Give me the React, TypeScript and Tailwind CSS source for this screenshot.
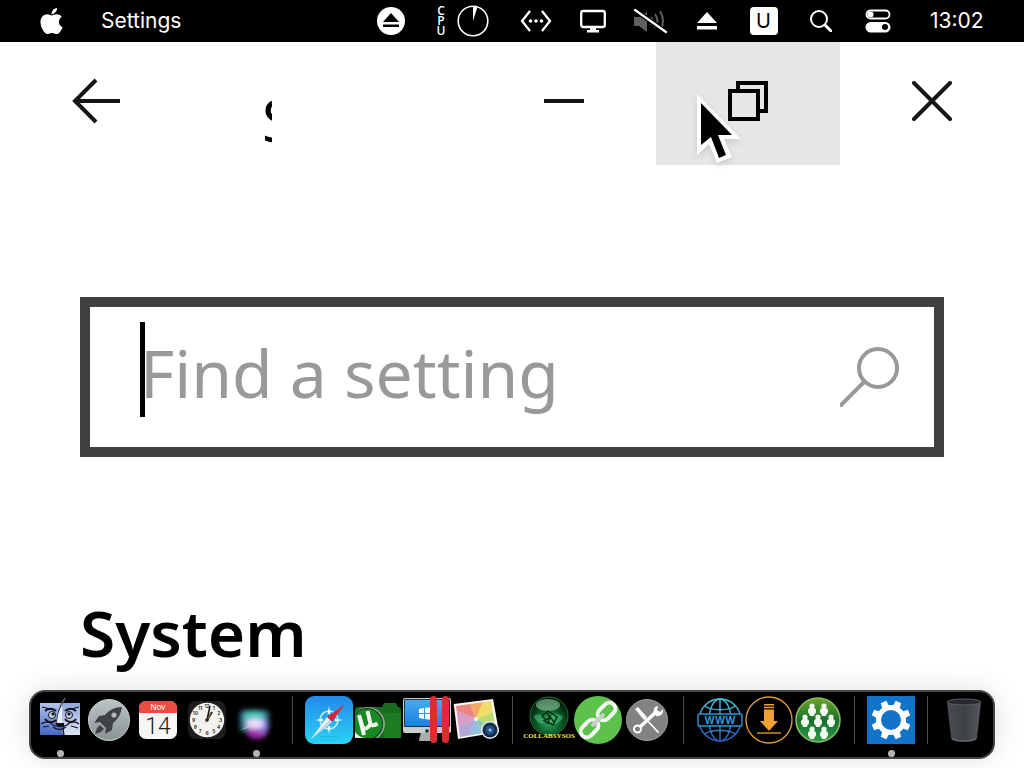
import type { ReactNode } from 'react'
import { FaApple } from 'react-icons/fa'

interface DockItem {
  name: string
  icon: ReactNode
  running?: boolean
}

const clockNumbers = [1, 2, 3, 4, 5, 6, 7, 8, 9, 10, 11, 12]
const people = [[18, 13], [30, 13], [11, 24], [24, 24], [37, 24], [18, 36], [30, 36]]
const teeth = [0, 45, 90, 135, 180, 225, 270, 315]
const petals = ['#f3ab62', '#f1dc66', '#bfdb6d', '#8fcbab', '#93bfe0', '#b3a7d8', '#da9cc6', '#ec8484']

function Icon({ children }: { children: ReactNode }) {
  return (
    <svg viewBox="0 0 48 48" className="size-12 overflow-visible" aria-hidden="true">
      {children}
    </svg>
  )
}

const dockGroups: DockItem[][] = [
  [
    {
      name: 'Finder',
      running: true,
      icon: (
        <Icon>
          <defs>
            <linearGradient id="finderLeft" x1="0" y1="0" x2="0" y2="1">
              <stop offset="0" stopColor="#b4c4ea" />
              <stop offset="1" stopColor="#4468c4" />
            </linearGradient>
            <linearGradient id="finderRight" x1="0" y1="0" x2="0" y2="1">
              <stop offset="0" stopColor="#8fa8dc" />
              <stop offset="1" stopColor="#dfe3f2" />
            </linearGradient>
          </defs>
          <rect x="4" y="7" width="40" height="32" fill="url(#finderLeft)" />
          <path d="M27 7h17v32H27c-1-4-1-7-1-11h-5c0-8 2-15 6-21z" fill="url(#finderRight)" />
          <path d="M29 2c-5 8-8 15-8 26h6c0 5 0 8 1 11" fill="none" stroke="#10131f" strokeWidth="1.4" />
          <path d="M21 27c0-7 2-13 5-18v18z" fill="#e9edf8" />
          <path d="M29 2l-4 7" stroke="#6f7276" strokeWidth="1.2" />
          <g fill="none" stroke="#10131f" strokeWidth="1.2">
            <path d="M6 11l12 3M31 14l12-3M5 28c5-3 9-3 12 1 5 2 10 2 14 0 4-4 8-4 12-1M7 31l6-1M35 30l7 2M17 31c4 3 9 3 13 0" />
            <path d="M9 15c3-3 8-3 11 0M29 15c3-3 8-3 11 0M9 23c3 4 8 4 11 1M29 23c3 4 8 4 11 0" strokeWidth="2" />
          </g>
          <circle cx="16" cy="19" r="3.5" fill="#ccd3e6" stroke="#10131f" />
          <circle cx="33" cy="19" r="3.5" fill="#ccd3e6" stroke="#10131f" />
          <circle cx="17" cy="18" r="1.6" fill="#10131f" />
          <circle cx="33" cy="18" r="1.6" fill="#10131f" />
          <path d="M19 27h9v3h-7z" fill="#10131f" />
        </Icon>
      ),
    },
    {
      name: 'Launchpad',
      icon: (
        <Icon>
          <defs>
            <linearGradient id="launchpad" x1="0" y1="0" x2="0" y2="1">
              <stop offset="0" stopColor="#bcc4c6" />
              <stop offset="1" stopColor="#8a9293" />
            </linearGradient>
          </defs>
          <circle cx="24" cy="24" r="20.5" fill="url(#launchpad)" stroke="#c9cfd0" strokeWidth="1" />
          <path d="M37 11c-7 0-13 3-17 8l-6 1-5 7 6-1 6 6-1 6 7-4 1-7c5-4 8-9 9-16zM15 29l-3 3-2 6 6-2 3-3z" fill="#3c4245" />
          <circle cx="29" cy="19" r="2.6" fill="#b0b8ba" />
        </Icon>
      ),
    },
    {
      name: 'Calendar',
      icon: (
        <Icon>
          <rect x="5" y="5" width="38" height="38" rx="7" fill="#f8f6f5" />
          <path d="M5 17v-5a7 7 0 0 1 7-7h24a7 7 0 0 1 7 7v5z" fill="#ec4c40" />
          <text x="24" y="14" textAnchor="middle" fontSize="8" fill="#fff" className="font-['Inter']">Nov</text>
          <text x="24" y="38" textAnchor="middle" fontSize="23" fontWeight="300" fill="#222" className="font-['Roboto']">14</text>
        </Icon>
      ),
    },
    {
      name: 'Clock',
      icon: (
        <Icon>
          <rect x="5" y="5" width="38" height="38" rx="8" fill="#1d1d1e" />
          <circle cx="24" cy="24" r="17.2" fill="#f4f2ee" />
          <g fontSize="5" fontWeight="600" textAnchor="middle" fill="#222" className="font-['Inter']">
            {clockNumbers.map((n) => (
              <text
                key={n}
                x={24 + 13.5 * Math.sin((n * Math.PI) / 6)}
                y={25.8 - 13.5 * Math.cos((n * Math.PI) / 6)}
              >
                {n}
              </text>
            ))}
          </g>
          <path d="M24 24l5-8" stroke="#111" strokeWidth="2" />
          <path d="M24 24l3-14" stroke="#111" strokeWidth="1.5" />
          <path d="M22 27l6-10" stroke="#c7a43c" strokeWidth=".8" />
          <circle cx="24" cy="24" r="1.8" fill="#222" />
        </Icon>
      ),
    },
    {
      name: 'Siri',
      running: true,
      icon: (
        <Icon>
          <defs>
            <filter id="siriBlur" x="-50%" y="-50%" width="200%" height="200%">
              <feGaussianBlur stdDeviation="2.5" />
            </filter>
          </defs>
          <g filter="url(#siriBlur)">
            <rect x="8" y="14" width="29" height="22" rx="5" fill="#3b7d92" />
            <ellipse cx="25" cy="37" rx="10" ry="6" fill="#a22bb0" />
            <ellipse cx="22" cy="21" rx="10" ry="6" fill="#4fc9bd" />
            <ellipse cx="31" cy="30" rx="6" ry="7" fill="#7d76dd" />
            <ellipse cx="23" cy="28" rx="9" ry="5" fill="#efdcff" />
          </g>
          <path d="M8 34c6-1 11-3 15-7-5 2-10 4-15 7z" fill="#d6c9dd" opacity=".6" />
        </Icon>
      ),
    },
  ],
  [
    {
      name: 'Safari',
      icon: (
        <Icon>
          <defs>
            <linearGradient id="safari" x1="0" y1="0" x2="0" y2="1">
              <stop offset="0" stopColor="#2389ea" />
              <stop offset="1" stopColor="#28d3f6" />
            </linearGradient>
          </defs>
          <rect width="48" height="48" rx="9" fill="url(#safari)" />
          <circle cx="24" cy="24" r="9" fill="none" stroke="#c5eefb" strokeWidth="1.5" />
          <path d="M24 10l1.5 8h-3zM24 38l1.5-8h-3zM10 24l8-1.5v3zM38 24l-8-1.5v3z" fill="#e7fbff" />
          <path d="M40 8L22 21l5 5z" fill="#d9263c" />
          <path d="M6 43l16-22 5 5z" fill="#f1f7fa" />
          <path d="M6 43l18.5-19.5L27 26z" fill="#c4d6e2" />
          <path d="M15 41h18M17 44h14" stroke="#159fd8" strokeWidth="1" strokeDasharray="1 1" />
        </Icon>
      ),
    },
    {
      name: 'uTorrent',
      icon: (
        <Icon>
          <defs>
            <clipPath id="folderClip">
              <rect x="1" y="7" width="46" height="35" />
            </clipPath>
          </defs>
          <path d="M1 14q0-3 3-3h24l2-4h12l2 4q3 0 3 3v28H1z" fill="#176d1d" />
          <path d="M30 17h17v25H30z" fill="#1c7c22" />
          <g clipPath="url(#folderClip)">
            <circle cx="14" cy="28" r="17" fill="#8e9b90" />
            <circle cx="13" cy="28" r="16" fill="#0b3d10" />
            <circle cx="13" cy="28" r="15" fill="#178a22" />
            <path d="M1 36c4 5 8 6 13 6H1z" fill="#e8efe8" />
          </g>
          <path d="M5 19l5 20M6 22l2.500 9q4 4 8-3l-3-13m3 13q2 3 7-.5" fill="none" stroke="#f0f5ec" strokeWidth="4" />
        </Icon>
      ),
    },
    {
      name: 'Parallels Desktop',
      icon: (
        <Icon>
          <defs>
            <linearGradient id="screen" x1="0" y1="0" x2="0" y2="1">
              <stop offset="0" stopColor="#4ba9ee" />
              <stop offset="1" stopColor="#1683e0" />
            </linearGradient>
          </defs>
          <path d="M18 36h13l3 8q0 1-1 1H17q-1 0-1-1z" fill="#a9adb0" />
          <rect x="0" y="2" width="48" height="35" rx="2" fill="#c9cccd" />
          <rect x="1" y="3" width="46" height="28" rx="1" fill="#27313b" />
          <rect x="2" y="4" width="44" height="26" fill="url(#screen)" />
          <path d="M16 13l5-1v5h-5zM22 12l7-1v6h-7zM16 18h5v5l-5-1zM22 18h7v6l-7-1z" fill="#fff" />
          <circle cx="24" cy="35" r="1.8" fill="#222" />
          <rect x="27" y="0" width="7" height="47" rx="3.5" fill="#dd2d2f" />
          <rect x="39" y="0" width="7" height="47" rx="3.5" fill="#dd2d2f" />
        </Icon>
      ),
    },
    {
      name: 'Photos',
      icon: (
        <Icon>
          <defs>
            <clipPath id="photoClip">
              <path d="M4 10l35-5 5 30-36 6z" />
            </clipPath>
          </defs>
          <path d="M1.7 8L41 3l6 33-41 7z" fill="#f8f7f4" />
          <g clipPath="url(#photoClip)">
            {petals.map((fill, i) => (
              <path key={fill} d="M24 23L9-13h30z" fill={fill} transform={`rotate(${i * 45} 24 23)`} />
            ))}
          </g>
          <circle cx="24" cy="23" r="2" fill="#fffbe9" />
          <circle cx="38" cy="34" r="9" fill="#e4e9ee" />
          <circle cx="38" cy="34" r="7.5" fill="#142c4f" />
          <circle cx="38" cy="34" r="4.5" fill="#245486" />
          <circle cx="38" cy="34" r="1.5" fill="#9ccae8" />
        </Icon>
      ),
    },
  ],
  [
    {
      name: 'Collabsysos',
      icon: (
        <Icon>
          <defs>
            <radialGradient id="orb" cx=".5" cy=".65" r=".55">
              <stop offset="0" stopColor="#2fae62" />
              <stop offset=".6" stopColor="#0d5b2a" />
              <stop offset="1" stopColor="#03230e" />
            </radialGradient>
          </defs>
          <circle cx="24" cy="20" r="19" fill="url(#orb)" stroke="#1d7a35" strokeWidth="1" />
          <ellipse cx="23" cy="9" rx="12" ry="6" fill="#9fd9b0" opacity=".55" />
          <path d="M9 20c5-3 9-1 13 3 5-6 9-7 16-2-4 7-10 9-17 5-5 4-10 0-12-6z" fill="#4fd386" opacity=".5" />
          <path d="M17 20l6-5 9 6-4 8-5-3 2-5-4 3zM22 17l7 9M18 24l6 4" fill="none" stroke="#032c12" strokeWidth="1.5" />
          <text x="24" y="42" textAnchor="middle" fontSize="7" fontWeight="700" fill="#f4e83a" className="font-['Liberation_Serif']">COLLABSYSOS</text>
        </Icon>
      ),
    },
    {
      name: 'Links',
      icon: (
        <Icon>
          <circle cx="24" cy="24" r="24" fill="#5cc24b" />
          <g fill="none" strokeWidth="4" transform="rotate(-45 24 24)">
            <rect x="2" y="18" width="20" height="12" rx="6" stroke="#f4f7f2" />
            <rect x="26" y="18" width="20" height="12" rx="6" stroke="#f4f7f2" />
            <path d="M17 24h14" stroke="#c9d0c9" strokeLinecap="round" />
          </g>
        </Icon>
      ),
    },
    {
      name: 'Tools',
      icon: (
        <Icon>
          <circle cx="24" cy="24" r="20.5" fill="#828282" stroke="#9b9b9b" strokeWidth="1" />
          <path d="M17 31l16-15" stroke="#fff" strokeWidth="3.5" />
          <circle cx="14.5" cy="33" r="3.5" fill="none" stroke="#fff" strokeWidth="2" />
          <path d="M31 17c-1-4 1-7 4-7l-1 4 3 2 3-3c1 4-2 8-7 7z" fill="#fff" />
          <path d="M12 13l3-2 9 10-3 3z" fill="#fff" />
          <path d="M21 21l14 15" stroke="#fff" strokeWidth="1.8" strokeLinecap="round" />
        </Icon>
      ),
    },
  ],
  [
    {
      name: 'Web',
      icon: (
        <Icon>
          <defs>
            <linearGradient id="web" gradientUnits="userSpaceOnUse" x1="0" y1="3" x2="0" y2="45">
              <stop offset="0" stopColor="#4fc6dc" />
              <stop offset="1" stopColor="#2563c4" />
            </linearGradient>
          </defs>
          <g fill="none" stroke="url(#web)" strokeWidth="1.4">
            <circle cx="24" cy="24" r="21" />
            <ellipse cx="24" cy="24" rx="11" ry="21" />
            <path d="M24 3v42M8 10c9 5 23 5 32 0M8 38c9-5 23-5 32 0" />
          </g>
          <rect x="2" y="18" width="44" height="12" rx="1" fill="#04080c" stroke="#2f94d4" strokeWidth="1.4" />
          <text x="24" y="27.5" textAnchor="middle" fontSize="10" fontWeight="600" fill="#3aa2dc" className="font-['Inter']">WWW</text>
        </Icon>
      ),
    },
    {
      name: 'Downloads',
      icon: (
        <Icon>
          <circle cx="24" cy="24" r="23" fill="none" stroke="#d9973a" strokeWidth="1.4" />
          <path d="M19 8h10v1.5H19zM19 10.700h10v1.6H19zM19 13.500h10V25h4l-9 10-9-10h4z" fill="#f0a136" />
          <path d="M12 37h24" stroke="#f0a136" strokeWidth="1.3" />
        </Icon>
      ),
    },
    {
      name: 'Community',
      icon: (
        <Icon>
          <defs>
            <linearGradient id="community" x1="0" y1="0" x2="0" y2="1">
              <stop offset="0" stopColor="#6ea52c" />
              <stop offset=".5" stopColor="#17702c" />
              <stop offset="1" stopColor="#2c9a4c" />
            </linearGradient>
          </defs>
          <circle cx="24" cy="24" r="22" fill="url(#community)" stroke="#8fbd62" strokeWidth="1.5" />
          {people.map(([x, y]) => (
            <g key={`${x}-${y}`} fill="#f3faf0">
              <circle cx={x} cy={y - 3} r="2.6" />
              <rect x={x - 4} y={y - 1} width="8" height="6" rx="2.5" />
              <rect x={x - 2.5} y={y} width="5" height="7" rx="1.5" />
            </g>
          ))}
        </Icon>
      ),
    },
  ],
  [
    {
      name: 'Settings',
      running: true,
      icon: (
        <Icon>
          <rect width="48" height="48" fill="#1273cb" />
          <circle cx="24" cy="24" r="12.5" fill="none" stroke="#fff" strokeWidth="5" />
          {teeth.map((angle) => (
            <path key={angle} d="M20.5 10l.5-5.5h6l.5 5.5z" fill="#fff" transform={`rotate(${angle + 22.5} 24 24)`} />
          ))}
        </Icon>
      ),
    },
  ],
  [
    {
      name: 'Trash',
      icon: (
        <Icon>
          <defs>
            <linearGradient id="trash" x1="0" y1="0" x2="1" y2="0">
              <stop offset="0" stopColor="#4a4d51" />
              <stop offset=".5" stopColor="#3d4044" />
              <stop offset="1" stopColor="#55585c" />
            </linearGradient>
          </defs>
          <path d="M7 6l4 36q0 4 13 4t13-4l4-36z" fill="url(#trash)" />
          <ellipse cx="24" cy="6" rx="17" ry="3" fill="#26282b" stroke="#5c5f63" strokeWidth="1" />
          <path d="M12 42q3 3 12 3t12-3" fill="none" stroke="#6c6f73" strokeWidth="1" />
        </Icon>
      ),
    },
  ],
]

const menuIcons: DockItem[] = [
  {
    name: 'Network',
    icon: (
      <svg viewBox="0 0 32 22" className="h-[22px] w-8">
        <path d="M10 1L2 11l8 10M22 1l8 10-8 10" fill="none" stroke="#fff" strokeWidth="2.3" />
        <circle cx="10.5" cy="11" r="1.8" fill="#fff" />
        <circle cx="16" cy="11" r="1.8" fill="#fff" />
        <circle cx="21.5" cy="11" r="1.8" fill="#fff" />
      </svg>
    ),
  },
  {
    name: 'Display',
    icon: (
      <svg viewBox="0 0 26 24" className="h-6 w-[26px]">
        <rect x="1.2" y="2" width="23.6" height="16" rx="2" fill="none" stroke="#fff" strokeWidth="2.3" />
        <path d="M10 18h6v3h3v2.500H7V21h3z" fill="#fff" />
      </svg>
    ),
  },
  {
    name: 'Muted',
    icon: (
      <svg viewBox="0 0 34 26" className="h-[26px] w-[34px]">
        <path d="M1 9h5l8-5v20l-8-6H1z" fill="#5f5f5f" />
        <path d="M18 9q3 4 0 8M22 6q5 7 0 14M27 3q6 10 0 20" fill="none" stroke="#5f5f5f" strokeWidth="2" />
        <path d="M2 2l31 22" stroke="#000" strokeWidth="5" />
        <path d="M2 2l31 22" stroke="#fff" strokeWidth="2.2" strokeLinecap="round" />
      </svg>
    ),
  },
  {
    name: 'Eject',
    icon: (
      <svg viewBox="0 0 20 18" className="h-[18px] w-5">
        <path d="M10 0l10 11H0zM0 14h20v3.500H0z" fill="#fff" />
      </svg>
    ),
  },
  {
    name: 'Input source',
    icon: (
      <span className="flex size-7 items-center justify-center rounded bg-white font-['Inter'] text-xl text-black">U</span>
    ),
  },
  {
    name: 'Search',
    icon: (
      <svg viewBox="0 0 22 22" className="size-[22px]" fill="none" stroke="#fff">
        <circle cx="9" cy="9" r="8" strokeWidth="2" />
        <path d="M15 15l6 6" strokeWidth="3" strokeLinecap="round" />
      </svg>
    ),
  },
  {
    name: 'Control Center',
    icon: (
      <svg viewBox="0 0 26 24" className="h-6 w-[26px]">
        <rect x="1.5" y="1.5" width="23" height="8" rx="4" fill="none" stroke="#fff" strokeWidth="1.8" />
        <circle cx="5.5" cy="5.5" r="3" fill="#fff" />
        <rect x="0.5" y="13" width="25" height="10.5" rx="5.2" fill="#fff" />
        <circle cx="20" cy="18" r="3" fill="#000" />
      </svg>
    ),
  },
]

function MenuBar() {
  return (
    <header className="flex h-[42px] items-center bg-black pl-10 pr-[38px] font-['Inter'] text-[21px] text-white">
      <button aria-label="Apple menu">
        <FaApple className="h-[30px] w-[23px]" />
      </button>
      <button className="ml-[38px]">Settings</button>
      <div className="ml-auto flex items-center">
        <button aria-label="Eject disk" className="flex w-[57px] justify-center">
          <svg viewBox="0 0 28 28" className="size-7">
            <circle cx="14" cy="14" r="14" fill="#fff" />
            <path d="M14 6l8 9H6zM6 17.500h16V20H6z" fill="#000" />
          </svg>
        </button>
        <button aria-label="CPU usage" className="flex w-[88px] items-center justify-center gap-3">
          <span className="flex flex-col items-center font-['Open_Sans'] text-xs font-semibold leading-[10px]">
            <span>C</span>
            <span>P</span>
            <span>U</span>
          </span>
          <svg viewBox="0 0 32 32" className="size-8">
            <circle cx="16" cy="16" r="14.8" fill="none" stroke="#fff" strokeWidth="1.6" />
            <path d="M16 16V1l4.500.8z" fill="#fff" />
          </svg>
        </button>
        {menuIcons.map((item) => (
          <button key={item.name} aria-label={item.name} className="flex w-[57px] justify-center">
            {item.icon}
          </button>
        ))}
        <time className="ml-6 w-14 whitespace-nowrap">13:02</time>
      </div>
    </header>
  )
}

function TitleBar() {
  return (
    <div className="flex h-[123px]">
      <button aria-label="Back" className="flex w-48 items-center justify-center pb-[5px]">
        <svg viewBox="0 0 48 46" className="h-[46px] w-12" fill="none" stroke="#161616" strokeWidth="4">
          <path d="M24 2L3 23l21 21M3 23h45" />
        </svg>
      </button>
      <h1 className="ml-[70px] w-2.5 self-end overflow-hidden text-[58px] leading-[91px]">S</h1>
      <div className="ml-auto flex">
        <button aria-label="Minimize" className="flex w-[184px] items-center justify-center pb-[5px]">
          <svg viewBox="0 0 40 4" className="h-1 w-10">
            <path d="M0 2h40" stroke="#161616" strokeWidth="4" />
          </svg>
        </button>
        <button aria-label="Restore" className="relative flex w-[184px] items-center justify-center bg-[#e6e6e6] pb-[5px]">
          <svg viewBox="0 0 40 40" className="size-10" fill="none" stroke="#000" strokeWidth="4">
            <rect x="2" y="10" width="28" height="28" />
            <path d="M10 10V2h28v28h-8" />
          </svg>
          <svg viewBox="0 0 50 74" className="absolute left-9 top-12 h-[74px] w-[50px] drop-shadow-md" aria-hidden="true">
            <path d="M5 4v61l12-11 8 19 15-6-8-18h17z" fill="#fff" />
            <path d="M9 13v42l10-8 8 21 7-3-8-20h14z" fill="#000" />
          </svg>
        </button>
        <button aria-label="Close" className="flex w-[184px] items-center justify-center pb-[5px]">
          <svg viewBox="0 0 40 40" className="size-10">
            <path d="M2 2l36 36M38 2L2 38" stroke="#161616" strokeWidth="4" strokeLinecap="round" />
          </svg>
        </button>
      </div>
    </div>
  )
}

function Dock() {
  return (
    <nav
      aria-label="Dock"
      className="mx-[29px] mb-[9px] mt-auto flex justify-center rounded-2xl border-2 border-[#454545] bg-black pt-1 shadow-[0_0_30px_rgba(0,0,0,0.12)]"
    >
      {dockGroups.map((group, i) => (
        <div key={group[0].name} className="flex">
          {i > 0 && (
            <div className="flex w-6 justify-center">
              <div className="h-12 w-px bg-[#4a4a4a]" />
            </div>
          )}
          {group.map((item) => (
            <button key={item.name} aria-label={item.name} className="flex w-[49px] flex-col items-center gap-1.5">
              {item.icon}
              <span className={item.running ? 'size-[7px] rounded-full bg-[#b4b4b4]' : 'size-[7px]'} />
            </button>
          ))}
        </div>
      ))}
    </nav>
  )
}

export default function App() {
  return (
    <div className="flex min-h-screen flex-col bg-white font-['Noto_Sans',sans-serif] text-black">
      <MenuBar />
      <TitleBar />
      <main className="px-20 pt-[132px]">
        <label className="relative flex h-40 items-center border-[10px] border-[#404040] pl-[50px] pr-[34px]">
          <span className="absolute left-[50px] top-[15px] h-[95px] w-[5px] bg-black" />
          <input
            type="text"
            aria-label="Find a setting"
            placeholder="Find a setting"
            className="h-full min-w-0 flex-1 bg-transparent pb-[10px] text-[66px] outline-none placeholder:text-[#999999]"
          />
          <svg viewBox="0 0 60 62" className="h-[62px] w-[60px]" fill="none" stroke="#999999" strokeWidth="4">
            <circle cx="38" cy="22" r="19" />
            <path d="M24 36L1 59" strokeLinecap="round" />
          </svg>
        </label>
        <h2 className="mt-32 text-[64px] font-semibold leading-[96px]">System</h2>
      </main>
      <Dock />
    </div>
  )
}
